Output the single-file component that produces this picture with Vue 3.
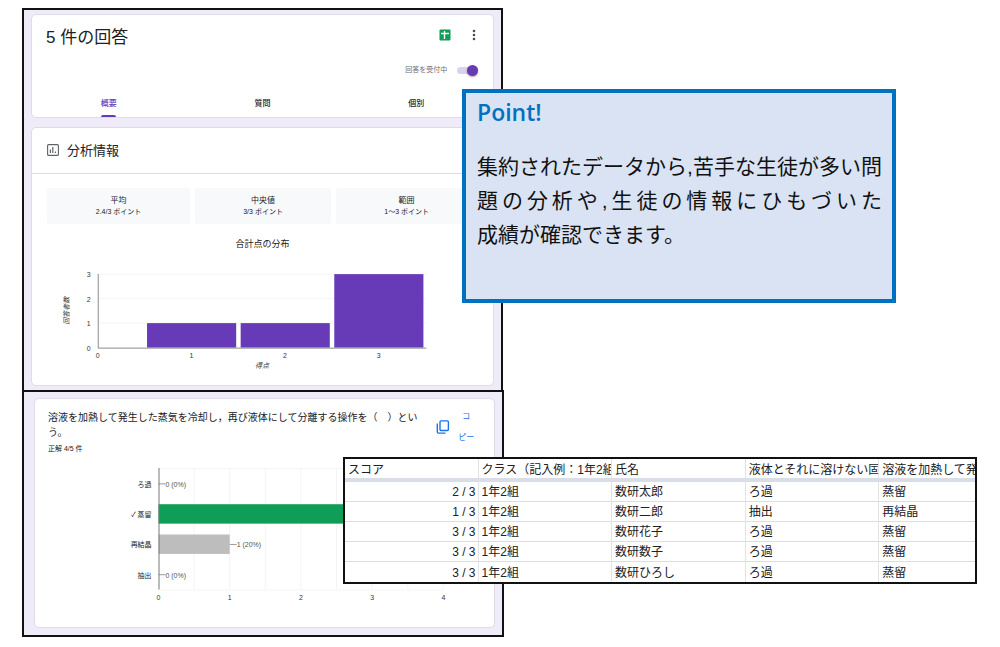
<script setup>
import { ref } from 'vue'

const accepting = ref(true)
const activeTab = ref('概要')
const tabs = ['概要', '質問', '個別']

const stats = [
  { label: '平均', value: '2.4/3 ポイント' },
  { label: '中央値', value: '3/3 ポイント' },
  { label: '範囲', value: '1～3 ポイント' },
]

const scoreBars = [
  { score: 1, count: 1 },
  { score: 2, count: 1 },
  { score: 3, count: 3 },
]
const scoreY = (n) => 92 - n * 24.6
const scoreX = (n) => 66 + n * 94

const answers = [
  { label: 'ろ過', count: 0, note: '0 (0%)' },
  { label: '✓ 蒸留', count: 4, note: '', fill: '#0f9d58' },
  { label: '再結晶', count: 1, note: '1 (20%)', fill: '#bdbdbd' },
  { label: '抽出', count: 0, note: '0 (0%)' },
]
const answerY = (i) => 24 + i * 30.4
const answerX = (n) => 124 + n * 71.5

const columns = ['スコア', 'クラス（記入例：1年2組', '氏名', '液体とそれに溶けない固', '溶液を加熱して発']
const rows = [
  ['2 / 3', '1年2組', '数研太郎', 'ろ過', '蒸留'],
  ['1 / 3', '1年2組', '数研二郎', '抽出', '再結晶'],
  ['3 / 3', '1年2組', '数研花子', 'ろ過', '蒸留'],
  ['3 / 3', '1年2組', '数研数子', 'ろ過', '蒸留'],
  ['3 / 3', '1年2組', '数研ひろし', 'ろ過', '蒸留'],
]
</script>

<template>
  <main class="page">
    <div class="forms">
      <section class="frame summary">
        <header class="card head">
          <div class="head-row">
            <h1>5 件の回答</h1>
            <div class="actions">
              <button type="button" class="icon-btn" aria-label="スプレッドシートで表示">
                <svg width="12" height="12" viewBox="0 0 12 12">
                  <rect x="0.5" y="0.5" width="11" height="11" rx="1" fill="#0f9d58" />
                  <path d="M2 4.5H10M5.5 2V10" stroke="#fff" stroke-width="1.4" />
                </svg>
              </button>
              <button type="button" class="icon-btn" aria-label="その他">
                <svg width="12" height="12" viewBox="0 0 12 12" fill="#4a4d51">
                  <circle cx="6" cy="2" r="1.3" />
                  <circle cx="6" cy="6" r="1.3" />
                  <circle cx="6" cy="10" r="1.3" />
                </svg>
              </button>
            </div>
          </div>
          <label class="accept">
            <span>回答を受付中</span>
            <input v-model="accepting" type="checkbox" role="switch" />
          </label>
          <nav class="tabs">
            <button
              v-for="t in tabs"
              :key="t"
              type="button"
              :class="{ active: t === activeTab }"
              @click="activeTab = t"
            >{{ t }}</button>
          </nav>
        </header>

        <article class="card insights">
          <h2>
            <svg width="12" height="12" viewBox="0 0 12 12" fill="none" stroke="#5f6368">
              <rect x="0.6" y="0.6" width="10.8" height="10.8" rx="1" stroke-width="1.1" />
              <path d="M3.4 5.5V9M5.8 3V9M8.4 7.5V9" stroke-width="1.2" />
            </svg>
            分析情報
          </h2>
          <dl class="stats">
            <div v-for="s in stats" :key="s.label">
              <dt>{{ s.label }}</dt>
              <dd>{{ s.value }}</dd>
            </div>
          </dl>
          <h3>合計点の分布</h3>
          <svg class="chart" viewBox="0 0 463 130">
            <g stroke="#f5f5f5">
              <line v-for="n in 3" :key="n" x1="67" x2="396" :y1="scoreY(n)" :y2="scoreY(n)" />
            </g>
            <rect
              v-for="b in scoreBars"
              :key="b.score"
              :x="scoreX(b.score) - 44.5"
              :y="scoreY(b.count)"
              width="89.5"
              :height="92 - scoreY(b.count)"
              fill="#673ab7"
            />
            <path d="M66.5 18V92.5H396" fill="none" stroke="#8a8a8a" />
            <g fill="#333" text-anchor="middle">
              <text v-for="n in [0, 1, 2, 3]" :key="'x' + n" :x="scoreX(n)" y="102">{{ n }}</text>
              <text v-for="n in [0, 1, 2, 3]" :key="'y' + n" x="57" :y="scoreY(n) + 3">{{ n }}</text>
              <text x="231" y="112" font-style="italic">得点</text>
              <text x="37" y="55" font-style="italic" transform="rotate(-90 37 55)">回答者数</text>
            </g>
          </svg>
        </article>
      </section>

      <section class="frame question">
        <article class="card">
          <div class="q-head">
            <div class="q-text">
              <h2>溶液を加熱して発生した蒸気を冷却し，再び液体にして分離する操作を（　）という。</h2>
              <p>正解 4/5 件</p>
            </div>
            <button type="button" class="copy">
              <svg width="14" height="14" viewBox="0 0 14 14" fill="none" stroke="#1a73e8" stroke-width="1.4">
                <rect x="4" y="0.9" width="8.4" height="9.6" rx="1" />
                <path d="M1.3 3.5V12Q1.3 13.1 2.4 13.1H9.5" />
              </svg>
              <span>コ<br />ピー</span>
            </button>
          </div>
          <svg class="chart" viewBox="0 0 461 167">
            <g stroke="#f4f4f4" fill="none">
              <line v-for="n in 8" :key="n" :x1="answerX(n / 2)" :x2="answerX(n / 2)" y1="8" y2="130" />
              <path d="M124 8.5H410M124 130.5H410" />
            </g>
            <g v-for="(a, i) in answers" :key="a.label">
              <rect
                v-if="a.count"
                x="124"
                :y="answerY(i) - 10"
                :width="answerX(a.count) - 124"
                height="19.5"
                :fill="a.fill"
              />
              <line
                v-if="a.note"
                :x1="answerX(a.count)"
                :x2="answerX(a.count) + 7"
                :y1="answerY(i)"
                :y2="answerY(i)"
                stroke="#999"
              />
              <text v-if="a.note" :x="answerX(a.count) + 7" :y="answerY(i) + 3" fill="#555">{{ a.note }}</text>
              <text x="117" :y="answerY(i) + 3" text-anchor="end" fill="#222">{{ a.label }}</text>
            </g>
            <line x1="124.5" x2="124.5" y1="8" y2="130" stroke="#777" />
            <g fill="#333" text-anchor="middle">
              <text v-for="n in [0, 1, 2, 3, 4]" :key="n" :x="answerX(n)" y="141">{{ n }}</text>
            </g>
          </svg>
        </article>
      </section>
    </div>

    <aside class="point">
      <h2>Point!</h2>
      <p>
        <span class="full">集約されたデータから,苦手な生徒が多い問</span>
        <span class="full">題の分析や,生徒の情報にひもづいた</span>
        <span>成績が確認できます。</span>
      </p>
    </aside>

    <div class="sheet">
      <table>
        <colgroup>
          <col v-for="c in columns" :key="c" />
        </colgroup>
        <thead>
          <tr>
            <th v-for="c in columns" :key="c" scope="col">{{ c }}</th>
          </tr>
        </thead>
        <tbody>
          <tr v-for="r in rows" :key="r[2]">
            <td v-for="(v, i) in r" :key="i">{{ v }}</td>
          </tr>
        </tbody>
      </table>
    </div>
  </main>
</template>

<style>
body {
  background: #fff;
}
</style>

<style scoped>
.page,
.page * {
  box-sizing: border-box;
}

.page {
  position: relative;
  padding: 8px 0 10px 22px;
  font-family: "Liberation Sans", "Noto Sans CJK JP", sans-serif;
  color: #202124;
}

h1, h2, h3, p, dl, dd {
  margin: 0;
  font-weight: 400;
}

button {
  border: 0;
  padding: 0;
  background: none;
  font: inherit;
  color: inherit;
}

svg {
  display: block;
}

.forms {
  width: 49.3%;
}

.frame {
  border: 2px solid #111;
  background: #f0ebf8;
}

.summary {
  display: flex;
  flex-direction: column;
  gap: 9px;
  margin-right: 1px;
  border-bottom: 0;
  padding: 4px 7px 4px;
}

.question {
  padding: 6px 7px 7px 10px;
}

.card {
  border: 1px solid #dfdce8;
  border-radius: 5px;
  background: #fff;
}

.head {
  height: 104px;
  display: flex;
  flex-direction: column;
}

.head-row {
  display: flex;
  justify-content: space-between;
  align-items: center;
  padding: 8px 13px 0 14px;
}

h1 {
  font-size: 17px;
  line-height: 30px;
}

.actions {
  display: flex;
  gap: 17px;
  padding-bottom: 6px;
}

.accept {
  display: flex;
  align-self: flex-end;
  align-items: center;
  gap: 10px;
  margin-top: 11px;
  padding-right: 15px;
  font-size: 7px;
  line-height: 12px;
  color: #6b6f74;
}

.accept input {
  appearance: none;
  display: flex;
  justify-content: flex-start;
  align-items: center;
  width: 21px;
  height: 7px;
  margin: 0;
  border-radius: 4px;
  background: #d9d9d9;
}

.accept input::before {
  content: "";
  width: 11px;
  height: 11px;
  flex: none;
  border-radius: 50%;
  background: #fff;
  box-shadow: 0 1px 2px #0005;
}

.accept input:checked {
  justify-content: flex-end;
  background: #dcd0f0;
}

.accept input:checked::before {
  background: #673ab7;
}

.tabs {
  display: grid;
  grid-template-columns: repeat(3, 1fr);
  margin-top: auto;
}

.tabs button {
  display: flex;
  flex-direction: column;
  align-items: center;
  height: 20px;
  font-size: 8px;
  line-height: 14px;
  font-weight: 500;
}

.tabs button::after {
  content: "";
  width: 15px;
  height: 2px;
  margin-top: auto;
  border-radius: 2px 2px 0 0;
}

.tabs .active {
  color: #673ab7;
}

.tabs .active::after {
  background: #673ab7;
}

.insights h2 {
  display: flex;
  align-items: center;
  gap: 8px;
  height: 46px;
  padding: 0 0 2px 15px;
  border-bottom: 1px solid #dcdde1;
  font-size: 13px;
}

.stats {
  display: grid;
  grid-template-columns: 143fr 136fr 141fr;
  gap: 5px;
  margin: 14px 16px 0 15px;
  text-align: center;
}

.stats div {
  height: 36px;
  padding-top: 7px;
  border-radius: 2px;
  background: #f8f9fa;
}

.stats dt {
  font-size: 8px;
  line-height: 12px;
}

.stats dd {
  font-size: 7px;
  line-height: 10px;
}

.insights h3 {
  padding: 14px 0 6px;
  font-size: 9px;
  line-height: 12px;
  text-align: center;
}

.chart {
  width: 100%;
  height: auto;
  font-size: 7px;
}

.q-head {
  display: flex;
  justify-content: space-between;
  padding: 11px 20px 5px 13px;
}

.q-text {
  flex: 1;
}

.q-text h2 {
  font-size: 10px;
  line-height: 15px;
}

.q-text p {
  margin-top: 3px;
  font-size: 7px;
  line-height: 12px;
}

.copy {
  display: flex;
  align-items: center;
  gap: 8px;
  height: 42px;
  margin: -4px 0 0 8px;
  color: #1a73e8;
  font-size: 8px;
  line-height: 21px;
}

.point {
  position: absolute;
  top: 89px;
  left: 46.2%;
  width: 43.4%;
  min-height: 214px;
  padding: 7px 10px 8px 11px;
  border: 4px solid #0070c0;
  background: #dae3f3;
  color: #111;
}

.point h2 {
  margin-bottom: 26px;
  color: #0070c0;
  font: 600 23px/24px "Open Sans", sans-serif;
}

.point p {
  font-size: 21px;
  line-height: 34px;
}

.point span {
  display: block;
  white-space: nowrap;
}

.point .full {
  white-space: normal;
  text-align: justify;
  text-align-last: justify;
}

.sheet {
  position: absolute;
  top: 457px;
  left: 34.3%;
  width: 63.4%;
  border: 2px solid #111;
  background: #fff;
}

table {
  width: 100%;
  table-layout: fixed;
  border-collapse: separate;
  border-spacing: 0;
  font-size: 12px;
}

col {
  width: 21.2%;
}

col:last-child {
  width: 15.2%;
}

th,
td {
  height: 20px;
  padding: 2px 0 0 3px;
  border-right: 1px solid #e1e3e6;
  border-bottom: 1px solid #dcdedf;
  overflow: hidden;
  white-space: nowrap;
  text-align: left;
  font-weight: 400;
  line-height: 17px;
}

th {
  height: 23px;
  padding-top: 3px;
  line-height: 16px;
  border-bottom: 4px solid #d9dde8;
}

td:first-child {
  padding-right: 2px;
  text-align: right;
}

th:last-child,
td:last-child {
  border-right: 0;
}

tbody tr:last-child td {
  border-bottom: 0;
}
</style>
